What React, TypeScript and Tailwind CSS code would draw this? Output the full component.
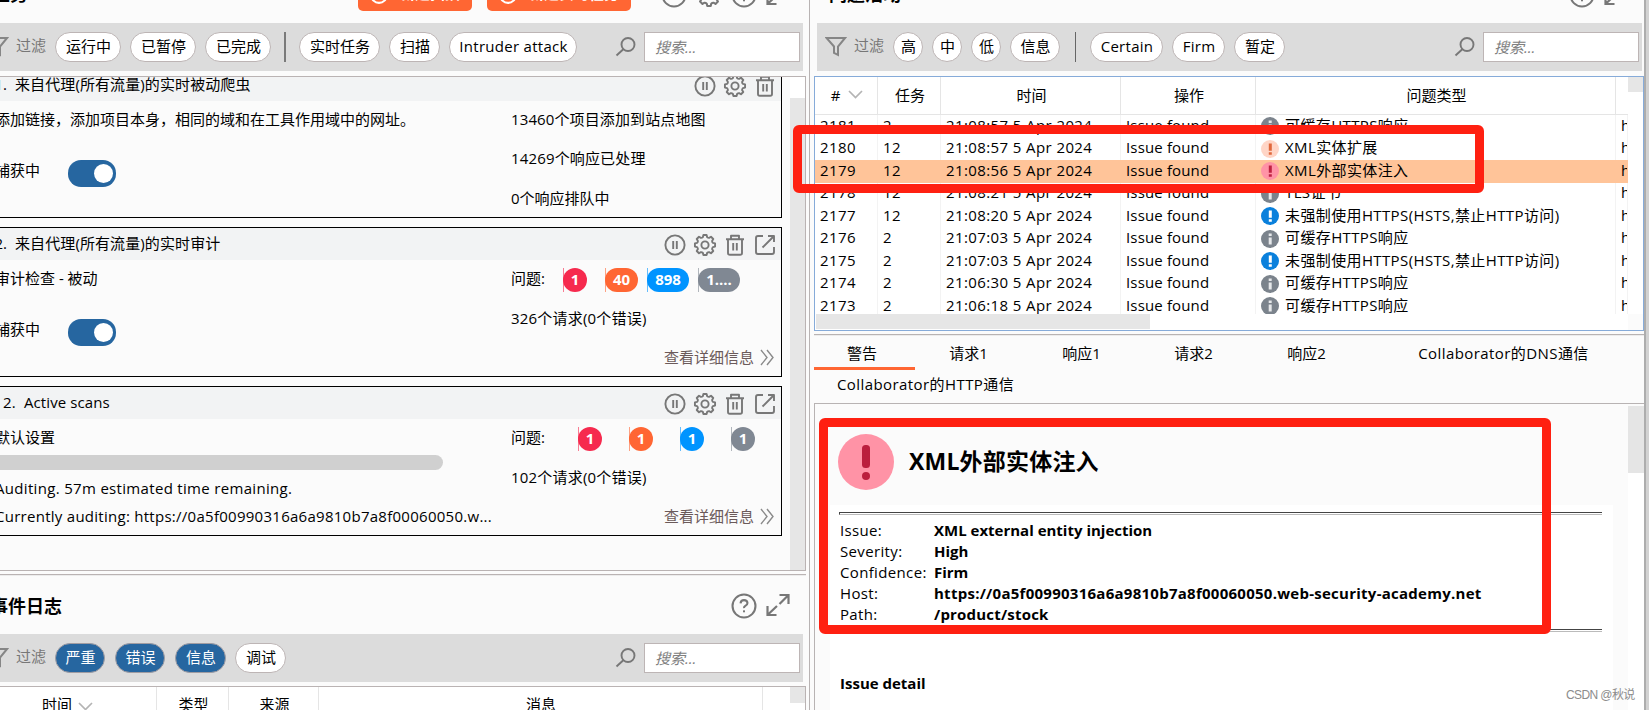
import clsx from "clsx";
import type { ReactNode } from "react";

//#region  Typings
type Severity = "high" | "medium" | "low" | "info";

type IssueRow = {
  id: number;
  task: string;
  time: string;
  type: string;
  severity: Severity;
};

type PillProps = {
  children: ReactNode;
  className: string;
  active?: boolean;
};

type CardProps = {
  index: string;
  title: string;
  icons: ReactNode;
  className?: string;
  indexClassName?: string;
  left: ReactNode;
  right: ReactNode;
};
//#endregion

const issues: IssueRow[] = [
  { id: 2181, task: "2", time: "21:08:57 5 Apr 2024", type: "可缓存HTTPS响应", severity: "info" },
  { id: 2180, task: "12", time: "21:08:57 5 Apr 2024", type: "XML实体扩展", severity: "medium" },
  { id: 2179, task: "12", time: "21:08:56 5 Apr 2024", type: "XML外部实体注入", severity: "high" },
  { id: 2178, task: "12", time: "21:08:21 5 Apr 2024", type: "TLS证书", severity: "info" },
  { id: 2177, task: "12", time: "21:08:20 5 Apr 2024", type: "未强制使用HTTPS(HSTS,禁止HTTP访问)", severity: "low" },
  { id: 2176, task: "2", time: "21:07:03 5 Apr 2024", type: "可缓存HTTPS响应", severity: "info" },
  { id: 2175, task: "2", time: "21:07:03 5 Apr 2024", type: "未强制使用HTTPS(HSTS,禁止HTTP访问)", severity: "low" },
  { id: 2174, task: "2", time: "21:06:30 5 Apr 2024", type: "可缓存HTTPS响应", severity: "info" },
  { id: 2173, task: "2", time: "21:06:18 5 Apr 2024", type: "可缓存HTTPS响应", severity: "info" },
];

const details = [
  ["Issue:", "XML external entity injection"],
  ["Severity:", "High"],
  ["Confidence:", "Firm"],
  ["Host:", "https://0a5f00990316a6a9810b7a8f00060050.web-security-academy.net"],
  ["Path:", "/product/stock"],
];

//#region  Icons
function gearPath(teeth: number, outer: number, inner: number) {
  const step = (Math.PI * 2) / teeth;
  const at = (r: number, a: number) =>
    `${(12 + r * Math.sin(a)).toFixed(2)} ${(12 - r * Math.cos(a)).toFixed(2)}`;
  let d = "";
  for (let i = 0; i < teeth; i++) {
    const a = i * step;
    d += `${i ? "L" : "M"}${at(outer, a - step * 0.2)}L${at(outer, a + step * 0.2)}`;
    d += `L${at(inner, a + step * 0.33)}Q${at(inner - 0.6, a + step * 0.5)} ${at(inner, a + step * 0.67)}`;
  }
  return d + "Z";
}

const GEAR = gearPath(8, 10.2, 8.2);

function Icon({ size = 24, children, className }: { size?: number; children: ReactNode; className?: string }) {
  return (
    <svg
      width={size}
      height={size}
      viewBox="0 0 24 24"
      fill="none"
      stroke="currentColor"
      strokeWidth="1.9"
      strokeLinejoin="round"
      className={clsx("shrink-0", className)}
    >
      {children}
    </svg>
  );
}

const PauseIcon = () => (
  <Icon>
    <circle cx="12" cy="12" r="9.6" />
    <path d="M10.2 8v8M13.8 8v8" />
  </Icon>
);

const GearIcon = ({ size }: { size?: number }) => (
  <Icon size={size}>
    <path d={GEAR} />
    <circle cx="12" cy="12" r="3.6" />
  </Icon>
);

const TrashIcon = () => (
  <Icon>
    <path d="M3 6.3h18M8 6V2.8h8V6M5 6.5V20q0 1.8 1.8 1.8h10.4q1.8 0 1.8-1.8V6.5M10.2 10v7.5M13.8 10v7.5" />
  </Icon>
);

const OpenIcon = () => (
  <Icon>
    <path d="M10 3H5Q3 3 3 5v14q0 2 2 2h14q2 0 2-2v-5M9.5 14.5 21 3M15 3h6v6" />
  </Icon>
);

const HelpIcon = () => (
  <Icon size={26}>
    <circle cx="12" cy="12" r="10.6" />
    <path d="M8.8 9.6q.3-3 3.2-3t3.2 2.6q0 1.6-1.7 2.5T12 13.9" />
    <path d="M12 16v1.8" />
  </Icon>
);

const ExpandIcon = () => (
  <Icon size={24}>
    <path strokeWidth="2.2" strokeLinejoin="miter" d="M1.5 13v9h9M2 21.5l9-8.5M13.5 2h9v9M22 2.5 13.5 11" />
  </Icon>
);

const FilterIcon = () => (
  <svg width="22" height="22" viewBox="0 0 22 22" fill="none" stroke="#868686" strokeWidth="2" className="shrink-0">
    <path d="M1.5 2H20l-7 8.5V19l-4-2v-6.5z" />
  </svg>
);

const SearchIcon = () => (
  <svg width="22" height="22" viewBox="0 0 22 22" fill="none" stroke="#777" strokeWidth="1.9" className="shrink-0">
    <circle cx="13" cy="8.5" r="6.5" />
    <path d="m8.3 13.2-6.8 6.3" />
  </svg>
);

const SortIcon = () => (
  <svg width="15" height="9" viewBox="0 0 15 9" fill="none" stroke="#b4b4b4" strokeWidth="1.7" className="shrink-0">
    <path d="m1 1 6.5 6.5L14 1" />
  </svg>
);

const MoreIcon = () => (
  <svg width="14" height="17" viewBox="0 0 14 17" fill="none" stroke="#8a8a8a" strokeWidth="1.4" className="shrink-0">
    <path d="m1 1 6 7.5L1 16M7 1l6 7.5L7 16" />
  </svg>
);

const severityColors: Record<Severity, [string, string]> = {
  high: ["#ff93a6", "#bf2242"],
  medium: ["#ffd5c6", "#e0683c"],
  low: ["#0a80dc", "#ffffff"],
  info: ["#7b838c", "#e6e8ea"],
};

function SeverityIcon({ severity }: { severity: Severity }) {
  const [bg, fg] = severityColors[severity];
  return (
    <svg width="18" height="18" viewBox="0 0 18 18" className="shrink-0">
      <circle cx="9" cy="9" r="9" fill={bg} />
      {severity === "info" ? (
        <path fill={fg} d="M7.7 3.5h3V6h-3zM7.7 7.5h3v7h-3z" />
      ) : (
        <path fill={fg} d="M7.8 3.5h3v7.3h-3zM7.8 12.2h3v2.6h-3z" />
      )}
    </svg>
  );
}
//#endregion

function Pill({ children, className, active }: PillProps) {
  return (
    <button
      type="button"
      className={clsx(
        "flex h-[30px] shrink-0 items-center justify-center rounded-full border-[1.5px] pb-[2px] pl-px whitespace-nowrap",
        active ? "border-[#a09ca2] bg-[#2666a0] text-white" : "border-[#bdb5b5] bg-white",
        className,
      )}
    >
      {children}
    </button>
  );
}

function FilterBar({ children, className }: { children: ReactNode; className?: string }) {
  return (
    <div className={clsx("flex h-12 shrink-0 items-center bg-[#dcdcdc]", className)}>
      <FilterIcon />
      <span className="-mt-1 ml-[7px] w-[39px] shrink-0 text-[#777]">过滤</span>
      {children}
      <div className="mr-[3px] ml-auto flex items-center">
        <SearchIcon />
        <div className="ml-[7px] flex h-[30px] w-[156px] items-center border-[1.5px] border-[#bdb5b5] bg-white pl-[10px] text-[#808080] italic">
          搜索...
        </div>
      </div>
    </div>
  );
}

function Toggle() {
  return (
    <div className="flex h-[27px] w-12 items-center justify-end rounded-[13px] bg-[#2666a0] pr-[3px]">
      <div className="size-[19px] rounded-full bg-white" />
    </div>
  );
}

function Badge({ children, className }: { children: ReactNode; className: string }) {
  return (
    <div className={clsx("h-6 shrink-0 border-l", className)}>
      <div className="-ml-px flex h-6 items-center justify-center rounded-full pb-[2px] font-bold text-white">
        {children}
      </div>
    </div>
  );
}

function More() {
  return (
    <div className="mt-[15px] flex h-[22px] items-center justify-end gap-[6px] pr-[7px] text-[#6b5a5a]">
      <span className="-mt-px">查看详细信息</span>
      <MoreIcon />
    </div>
  );
}

function TaskCard({ index, title, icons, className, indexClassName = "w-[26px]", left, right }: CardProps) {
  return (
    <section className={clsx("h-[150px] w-[802px] shrink-0 border border-black bg-[#fbfbfb]", className)}>
      <header className="flex h-8 items-center bg-[#f2f3f4] pr-1">
        <span className={clsx("-mt-[2px] text-right", indexClassName)}>{index}</span>
        <span className="-mt-[2px] ml-2 tracking-[0.1px]">{title}</span>
        <div className="ml-auto flex gap-[6px] pt-[2px] text-[#777]">{icons}</div>
      </header>
      <div className="flex">
        <div className="w-[530px] shrink-0 pl-[14px]">{left}</div>
        <div className="grow">{right}</div>
      </div>
    </section>
  );
}

function AllIcons() {
  return (
    <>
      <PauseIcon />
      <GearIcon />
      <TrashIcon />
      <OpenIcon />
    </>
  );
}

function CaptureRow() {
  return (
    <div className="mt-[28px] flex h-[27px]">
      <span className="w-[73px] leading-[20px]">捕获中</span>
      <Toggle />
    </div>
  );
}

function ScanButton({ children, className }: { children: ReactNode; className: string }) {
  return (
    <button
      type="button"
      className={clsx("-mt-[21px] flex h-8 items-center justify-center gap-3 rounded-[5px] bg-[#ff6633]", className)}
    >
      <svg width="18" height="18" viewBox="0 0 16 16" fill="none" stroke="currentColor" strokeWidth="1.8">
        <circle cx="8" cy="8" r="7" />
        <path d="M8 4.5v7M4.5 8h7" />
      </svg>
      <span className="pb-[5px]">{children}</span>
    </button>
  );
}

function TasksPanel() {
  return (
    <>
      <header className="flex h-[23px] shrink-0 justify-between pl-[358px]">
        <h2 className="-mt-[18px] -ml-[368px] h-[24px] w-[368px] text-[18px] leading-[24px] font-bold">
          <span className="pl-[2px]">任务</span>
        </h2>
        <div className="flex gap-[15px] font-bold text-white">
          <ScanButton className="w-[114px]">新建扫描</ScanButton>
          <ScanButton className="w-[144px]">新建实时任务</ScanButton>
        </div>
        <div className="-mt-[18px] mr-[19px] ml-auto flex gap-[9px] text-[#777]">
          <Icon size={26}>
            <circle cx="12" cy="12" r="10.6" />
          </Icon>
          <GearIcon size={26} />
          <HelpIcon />
          <ExpandIcon />
        </div>
      </header>
      <FilterBar className="-ml-[13px] w-[816px]">
        <Pill className="mr-[9px] w-[66px]">运行中</Pill>
        <Pill className="mr-[9px] w-[66px]">已暂停</Pill>
        <Pill className="w-[66px]">已完成</Pill>
        <div className="mr-[13px] ml-[13px] h-[30px] w-[2px] bg-[#7a7a7a]" />
        <Pill className="mr-[9px] w-[81px]">实时任务</Pill>
        <Pill className="mr-[9px] w-[51px]">扫描</Pill>
        <Pill className="w-[128px] tracking-[0.28px]">Intruder attack</Pill>
      </FilterBar>
      <div className="mt-[5px] flex h-[495px] w-[806px] shrink-0 justify-between overflow-hidden border border-l-0 border-[#bab3b3]">
        <div className="-ml-5 flex flex-col gap-[9px]">
          <TaskCard
            className="-mt-[9px]"
            index="1."
            title="来自代理(所有流量)的实时被动爬虫"
            icons={
              <>
                <PauseIcon />
                <GearIcon />
                <TrashIcon />
              </>
            }
            left={
              <>
                <p className="mt-[7px] h-6 leading-[22px]">添加链接，添加项目本身，相同的域和在工具作用域中的网址。</p>
                <CaptureRow />
              </>
            }
            right={
              <>
                <p className="mt-[7px] h-6 leading-[22px] tracking-[0.12px]">13460个项目添加到站点地图</p>
                <p className="mt-[15px] h-6 leading-[22px] tracking-[0.15px]">14269个响应已处理</p>
                <p className="mt-[16px] h-6 leading-[22px]">0个响应排队中</p>
              </>
            }
          />
          <TaskCard
            index="2."
            title="来自代理(所有流量)的实时审计"
            icons={<AllIcons />}
            left={
              <>
                <p className="mt-[7px] h-6 leading-[22px]">审计检查 - 被动</p>
                <CaptureRow />
              </>
            }
            right={
              <>
                <div className="mt-[8px] flex h-6">
                  <span className="w-[52px] leading-[20px]">问题:</span>
                  <Badge className="mr-[18px] w-6 border-[#f62a4e]/60 *:bg-[#f62a4e]">1</Badge>
                  <Badge className="mr-[9px] w-[33px] border-[#ff6633]/60 *:bg-[#ff6633]">40</Badge>
                  <Badge className="mr-[9px] w-[42px] border-[#0094ff]/60 *:bg-[#0094ff]">898</Badge>
                  <Badge className="w-[42px] border-[#808893]/60 *:bg-[#808893]">1....</Badge>
                </div>
                <p className="mt-[15px] h-6 leading-[22px] tracking-[0.2px]">326个请求(0个错误)</p>
                <More />
              </>
            }
          />
          <TaskCard
            index="2."
            indexClassName="w-[35px] tracking-[0.3px]"
            title="Active scans"
            icons={<AllIcons />}
            left={
              <>
                <p className="mt-[7px] h-6 leading-[22px]">默认设置</p>
                <div className="mt-[5px] h-[15px] w-[448px] rounded-r-lg bg-[#d0d0d0]" />
                <p className="mt-[7px] h-6 leading-[22px] tracking-[0.32px] whitespace-nowrap">
                  Auditing. 57m estimated time remaining.
                </p>
                <p className="mt-[4px] h-6 leading-[22px] tracking-[0.27px] whitespace-nowrap">
                  Currently auditing: https://0a5f00990316a6a9810b7a8f00060050.w...
                </p>
              </>
            }
            right={
              <>
                <div className="mt-[8px] flex h-6">
                  <span className="w-[67px] leading-[20px]">问题:</span>
                  <Badge className="mr-[27px] w-6 border-[#f62a4e]/60 *:bg-[#f62a4e]">1</Badge>
                  <Badge className="mr-[27px] w-6 border-[#ff6633]/60 *:bg-[#ff6633]">1</Badge>
                  <Badge className="mr-[27px] w-6 border-[#0094ff]/60 *:bg-[#0094ff]">1</Badge>
                  <Badge className="w-6 border-[#808893]/60 *:bg-[#808893]">1</Badge>
                </div>
                <p className="mt-[15px] h-6 leading-[22px] tracking-[0.2px]">102个请求(0个错误)</p>
                <More />
              </>
            }
          />
        </div>
        <div className="w-[15px] bg-white pt-[21px]">
          <div className="h-full bg-[#e6e6e6]" />
        </div>
      </div>
    </>
  );
}

function EventLog() {
  return (
    <>
      <div className="mt-[3px] h-[2px] w-[806px] shrink-0 border-b border-[#ececec] bg-[#bab3b3]" />
      <header className="flex h-[58px] shrink-0 items-center justify-between pr-[19px]">
        <h2 className="-ml-[10px] pt-px text-[18px] font-bold">事件日志</h2>
        <div className="flex gap-[9px] pt-[2px] text-[#777]">
          <HelpIcon />
          <ExpandIcon />
        </div>
      </header>
      <FilterBar className="-ml-[13px] w-[816px]">
        <Pill active className="mr-[10px] w-[50px]">严重</Pill>
        <Pill active className="mr-[10px] w-[50px]">错误</Pill>
        <Pill active className="mr-[9px] w-[51px]">信息</Pill>
        <Pill className="w-[51px]">调试</Pill>
      </FilterBar>
      <div className="mt-1 flex h-[40px] w-[806px] shrink-0 border-t border-r border-[#bab3b3] bg-white leading-[35px]">
        <div className="flex w-[157px] items-start border-r border-[#e5e5e5] pl-[42px]">
          时间
          <span className="mt-[15px] ml-[6px] leading-none">
            <SortIcon />
          </span>
        </div>
        <div className="w-[72px] border-r border-[#e5e5e5] pl-[2px] text-center">类型</div>
        <div className="w-[90px] border-r border-[#e5e5e5] pl-[2px] text-center">来源</div>
        <div className="w-[444px] border-r border-[#e5e5e5] pl-px text-center">消息</div>
        <div className="ml-auto h-4 w-[15px] bg-[#e6e6e6]" />
      </div>
    </>
  );
}

function IssueTable() {
  return (
    <div className="mt-[5px] h-[255px] shrink-0 border border-[#86abd9] bg-white">
      <div className="flex h-[237px]">
        <div className="w-[813px] overflow-hidden">
          <div className="flex h-[38px] border-b-[1.5px] border-[#e5e5e5] *:flex *:items-center *:justify-center *:border-r *:border-[#e5e5e5] *:pb-[2px] *:pl-[2px]">
            <div className="w-[63px] gap-2">
              #
              <SortIcon />
            </div>
            <div className="w-[63px]">任务</div>
            <div className="w-[180px]">时间</div>
            <div className="w-[135px]">操作</div>
            <div className="w-[360px]">问题类型</div>
          </div>
          {issues.map((row) => (
            <div
              key={row.id}
              className={clsx(
                "flex h-[22.5px] items-center whitespace-nowrap *:flex *:h-full *:shrink-0 *:items-center *:border-r *:border-[#f3f3f3]",
                row.id === 2179 && "bg-[#ffc499] *:border-transparent",
              )}
            >
              <div className="w-[63px] pb-[3px] pl-[5px] tracking-[0.4px]">{row.id}</div>
              <div className="w-[63px] pb-[3px] pl-[5px] tracking-[0.3px]">{row.task}</div>
              <div className="w-[180px] pb-[3px] pl-[5px] tracking-[0.4px]">{row.time}</div>
              <div className="w-[135px] pb-[3px] pl-[5px] tracking-[0.15px]">Issue found</div>
              <div className="w-[360px] gap-[6px] pl-[5px] tracking-[0.38px]">
                <SeverityIcon severity={row.severity} />
                <span className="pb-[3px]">{row.type}</span>
              </div>
              <div className="w-[12px] overflow-hidden pb-[3px] pl-[5px]">h</div>
            </div>
          ))}
        </div>
        <div className="grow">
          <div className="h-[15px] bg-[#e6e6e6]" />
        </div>
      </div>
      <div className="flex h-4 justify-between pl-px">
        <div className="h-[15px] w-[334px] bg-[#e6e6e6]" />
        <div className="h-full w-[15px] bg-[#fbfbfb]" />
      </div>
    </div>
  );
}

function Rule() {
  return <div className="h-[3px] w-[763px] border-t border-b border-l border-t-[#444] border-b-[#bbb] border-l-[#444]" />;
}

function Advisory() {
  return (
    <div className="flex h-[308px] grow overflow-hidden border-t border-l border-[#b8b3b3]">
      <div className="w-[813px] pl-[15px]">
        <div className="flex h-[101px] items-center pl-[8px]">
          <svg width="56" height="56" viewBox="0 0 56 56" className="mt-[15px] shrink-0">
            <circle cx="28" cy="28" r="28" fill="#ff93a6" />
            <rect x="24" y="11" width="8" height="23" rx="3.5" fill="#bb1e3d" />
            <circle cx="28" cy="42" r="4" fill="#bb1e3d" />
          </svg>
          <h1 className="mt-[13px] ml-[15px] text-[23px] font-bold tracking-[0.2px]">XML外部实体注入</h1>
        </div>
        <div className="h-[210px] w-[783px] bg-white pt-[7px] pl-[9px]">
          <Rule />
          <dl className="mt-[4px] h-[110px]">
            {details.map(([label, value]) => (
              <div key={label} className="flex h-[21px] items-center pl-px">
                <dt className="w-[94px] tracking-[0.35px]">{label}</dt>
                <dd
                  className={clsx(
                    "font-bold whitespace-nowrap",
                    label === "Host:" && "tracking-[0.26px]",
                    label === "Path:" && "tracking-[0.2px]",
                  )}
                >
                  {value}
                </dd>
              </div>
            ))}
          </dl>
          <Rule />
          <h3 className="mt-[40px] pl-px font-bold">Issue detail</h3>
        </div>
      </div>
      <div className="grow bg-white">
        <div className="h-[2px] bg-[#fbfbfb]" />
        <div className="h-[67px] bg-[#e5e5e5]" />
      </div>
    </div>
  );
}

function IssuesPanel() {
  return (
    <div className="flex w-[830px] shrink-0 flex-col">
      <header className="flex h-[23px] shrink-0 justify-between">
        <h2 className="-mt-[18px] pl-[15px] text-[18px] leading-[24px] font-bold">问题活动</h2>
        <div className="-mt-[18px] mr-[16px] flex gap-[9px] text-[#777]">
          <HelpIcon />
          <ExpandIcon />
        </div>
      </header>
      <FilterBar className="ml-[3px] w-[825px] pl-[8px]">
        <Pill className="mr-[9px] w-[30px]">高</Pill>
        <Pill className="mr-[9px] w-[30px]">中</Pill>
        <Pill className="mr-[9px] w-[30px]">低</Pill>
        <Pill className="w-[50px]">信息</Pill>
        <div className="mr-[14px] ml-[15px] h-[30px] w-px bg-[#666]" />
        <Pill className="mr-[9px] w-[73px] tracking-[0.28px]">Certain</Pill>
        <Pill className="mr-[9px] w-[53px] tracking-[0.28px]">Firm</Pill>
        <Pill className="w-[51px]">暂定</Pill>
      </FilterBar>
      <IssueTable />
      <div className="mt-[3px] h-[2px] shrink-0 border-b border-[#ececec] bg-[#b8b3b3]" />
      <nav className="flex h-[67px] shrink-0 flex-col">
        <div className="flex h-[34px] *:h-full *:text-center *:leading-[35px]">
          <div className="w-[101px] border-b-[3px] border-[#ff6633] pr-[5px]">警告</div>
          <div className="w-[105px] pl-[2px]">请求1</div>
          <div className="w-[120px] pl-[3px]">响应1</div>
          <div className="w-[105px] pl-[2px]">请求2</div>
          <div className="w-[120px] pl-[3px]">响应2</div>
          <div className="w-[275px] pl-[2px] tracking-[0.42px]">Collaborator的DNS通信</div>
        </div>
        <div className="pl-[23px] leading-[28px] tracking-[0.42px]">Collaborator的HTTP通信</div>
      </nav>
      <Advisory />
    </div>
  );
}

export default function App() {
  return (
    <main className="relative flex h-[710px] w-[1649px] overflow-hidden bg-[#fbfbfb] font-['Open_Sans','Noto_Sans_CJK_SC',sans-serif] text-[15px] leading-[22px] text-black">
      <div className="flex w-[809px] shrink-0 flex-col overflow-hidden">
        <TasksPanel />
        <EventLog />
      </div>
      <div className="w-[5px] shrink-0 border-l-[1.5px] border-[#b8b3b3]" />
      <IssuesPanel />
      <div className="w-[5px] shrink-0 border-l-2 border-[#adadad] bg-[#d2d2d2]" />

      {/* highlight frames */}
      <div className="absolute top-[125px] left-[793px] h-[68px] w-[691px] rounded-[6px] border-[9px] border-[#ff2011]" />
      <div className="absolute top-[418px] left-[819px] h-[216px] w-[732px] rounded-[6px] border-[9px] border-[#ff2011]" />
      <span className="absolute top-[684px] left-[1566px] font-['Liberation_Sans','Noto_Sans_CJK_SC',sans-serif] text-[12px] tracking-[-0.6px] whitespace-nowrap text-[#8c8c8c]">
        CSDN @秋说
      </span>
    </main>
  );
}
